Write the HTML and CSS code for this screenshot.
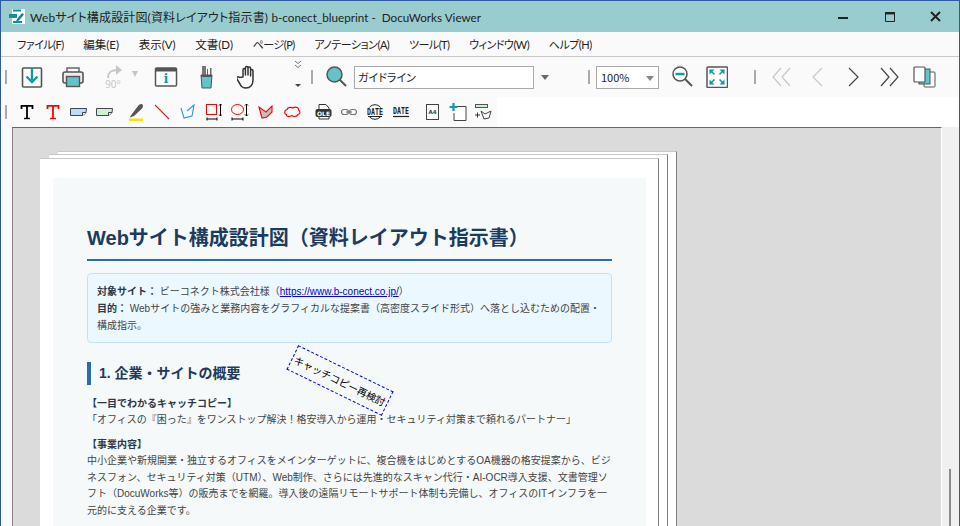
FILE: index.html
```html
<!DOCTYPE html>
<html lang="ja">
<head>
<meta charset="utf-8">
<title>DocuWorks Viewer</title>
<link rel="stylesheet" href="styles.css">
</head>
<body>
<div class="window">
  <header class="titlebar">
    <svg class="app-icon" width="16" height="16" viewBox="0 0 16 16"><rect x="3" y="0" width="13" height="15" fill="#fff"/><rect x="0" y="5" width="8" height="4" fill="#0f8f98"/><path d="M4 1.500h8M4 13h9" stroke="#0f8f98" stroke-width="2" fill="none"/><path d="M8 10l5-6 2 1.500-5 6-3 1z" fill="#1d7f88"/></svg>
    <span class="title-text">Webサイト構成設計図(資料レイアウト指示書) <span class="title-tail">b-conect_blueprint -&nbsp; DocuWorks Viewer</span></span>
    <div class="caption">
      <svg width="46" height="16" viewBox="0 0 46 16"><rect x="17" y="8" width="10" height="2" fill="#222"/></svg>
      <svg width="46" height="16" viewBox="0 0 46 16"><path d="M18.500 3.500h9v9h-9z" fill="none" stroke="#222"/><rect x="18" y="3" width="10" height="2.400" fill="#222"/></svg>
      <svg width="46" height="16" viewBox="0 0 46 16"><path d="M18 3l9 9M27 3l-9 9" stroke="#222" stroke-width="2"/></svg>
    </div>
  </header>
  <nav class="menubar">
    <span class="kana">ファイル(F)</span><span class="kanji">編集(E)</span><span class="kanji">表示(V)</span><span class="kanji">文書(D)</span><span class="kana">ページ(P)</span><span class="kana">アノテーション(A)</span><span class="kana">ツール(T)</span><span class="kana">ウィンドウ(W)</span><span class="kana">ヘルプ(H)</span>
  </nav>
  <div class="toolbar tb1">
    <i class="grip"></i>
    <div class="btn">
      <svg width="22" height="22" viewBox="0 0 22 22"><rect x="1.500" y="2" width="19" height="19" rx="1" fill="#fdfdfd" stroke="#555" stroke-width="1.600"/><path d="M11 2v12" stroke="#139aa5" stroke-width="2.400"/><path d="M5.500 10.500l5.500 5.500 5.500-5.500" fill="none" stroke="#139aa5" stroke-width="2.400"/></svg>
    </div>
    <div class="btn">
      <svg width="22" height="22" viewBox="0 0 22 22"><path d="M5 6V2h12v4" fill="#fff" stroke="#666" stroke-width="1.500"/><rect x="1" y="6" width="20" height="11" rx="2" fill="#eee" stroke="#555" stroke-width="1.600"/><rect x="4.500" y="10.500" width="13" height="10" fill="#63c2ca" stroke="#555" stroke-width="1.400"/></svg>
    </div>
    <div class="btn btn-rotate">
      <svg class="rot" width="22" height="26" viewBox="0 0 22 26"><path d="M4 14c0-6 3-8 10-8" fill="none" stroke="#c6c6c6" stroke-width="2"/><path d="M12 1l6 5-6 5z" fill="#c6c6c6"/><text x="1" y="24" class="t-90">90°</text></svg>
      <i class="caret caret-off"></i>
    </div>
    <div class="btn">
      <svg width="24" height="22" viewBox="0 0 24 22"><rect x="1.500" y="2" width="21" height="18" rx="1" fill="#fff" stroke="#555" stroke-width="1.500"/><rect x="1.500" y="2" width="21" height="3.500" fill="#555"/><text x="12" y="17" class="t-i">i</text></svg>
    </div>
    <div class="btn">
      <svg width="16" height="24" viewBox="0 0 16 24"><path d="M3 10V1h4v9z" fill="#777"/><path d="M8 10V4h1v6zM11 10V3h1.500v7z" fill="#666"/><path d="M2 10h11l-1 13H3z" fill="#63c2ca" stroke="#555"/><path d="M2 11h11" stroke="#555" stroke-width="2"/></svg>
    </div>
    <div class="btn">
      <svg width="22" height="24" viewBox="0 0 22 24"><path d="M6 12V5c0-2 2.400-2 2.400 0v5V3c0-2 2.600-2 2.600 0v7V3.500c0-2 2.600-2 2.600 0V11V6c0-2 2.400-2 2.400 0v9c0 5-3 8-7 8-3 0-5-1.500-6-4l-3-5c-1-2 1-3 2.500-1.500z" fill="#fff" stroke="#333" stroke-width="1.500" stroke-linejoin="round"/></svg>
    </div>
    <div class="more">
      <svg width="8" height="9" viewBox="0 0 8 9"><path d="M1 1l3 2.500L7 1M1 5l3 2.500L7 5" fill="none" stroke="#777"/></svg>
      <i class="caret caret-small"></i>
    </div>
    <i class="grip"></i>
    <svg class="search" width="22" height="22" viewBox="0 0 22 22"><path d="M13 13l7 7" stroke="#555" stroke-width="2"/><circle cx="8.500" cy="8.500" r="7.500" fill="#63c2ca" stroke="#555" stroke-width="1.500"/></svg>
    <div class="field">ガイドライン</div>
    <i class="caret caret-on"></i>
    <i class="grip grip-zoom"></i>
    <div class="select">100%<i class="caret caret-sel"></i></div>
    <svg class="zoomout" width="22" height="22" viewBox="0 0 22 22"><path d="M13 13l7 7" stroke="#555" stroke-width="2"/><circle cx="8" cy="8" r="7" fill="#fff" stroke="#555" stroke-width="1.500"/><rect x="3.500" y="6.800" width="9" height="2.500" fill="#139aa5"/></svg>
    <svg class="fit" width="22" height="22" viewBox="0 0 22 22"><rect x="1" y="1" width="20.500" height="20.500" rx="1" fill="#fff" stroke="#555" stroke-width="1.500"/><path d="M4 4l4.500 4.500M18 4l-4.500 4.500M4 18l4.500-4.500M18 18l-4.500-4.500" stroke="#139aa5" stroke-width="1.600"/><path d="M3.500 3.500h5l-5 5zM18.500 3.500h-5l5 5zM3.500 18.500h5l-5-5zM18.500 18.500h-5l5-5z" fill="#139aa5"/></svg>
    <i class="grip grip-nav"></i>
    <svg class="nav first" width="19" height="20" viewBox="0 0 19 20"><path d="M9 1L1 10l8 9M18 1l-8 9 8 9" fill="none" stroke="#c8c8c8" stroke-width="1.200"/></svg>
    <svg class="nav prev" width="11" height="20" viewBox="0 0 11 20"><path d="M10 1l-9 9 9 9" fill="none" stroke="#c8c8c8" stroke-width="1.200"/></svg>
    <svg class="nav next" width="11" height="20" viewBox="0 0 11 20"><path d="M1 1l9 9-9 9" fill="none" stroke="#444" stroke-width="1.200"/></svg>
    <svg class="nav last" width="19" height="20" viewBox="0 0 19 20"><path d="M1 1l8 9-8 9M10 1l8 9-8 9" fill="none" stroke="#444" stroke-width="1.200"/></svg>
    <svg class="pages" width="23" height="22" viewBox="0 0 23 22"><rect x="11" y="6" width="11" height="15" rx="1" fill="#fff" stroke="#555"/><rect x="6" y="3" width="11" height="15" fill="#63c2ca" stroke="#555"/><rect x="1" y="1" width="11" height="15" rx="1" fill="#fff" stroke="#555" stroke-width="1.200"/></svg>
  </div>
  <div class="toolbar tb2">
    <i class="grip"></i>
    <div class="tool"><svg width="14" height="16" viewBox="0 0 14 16"><path d="M1.500 5V1.800h11V5M7 1.800V14" fill="none" stroke="#000" stroke-width="1.800"/><path d="M4 14.500h6" stroke="#000" stroke-width="1.400"/></svg></div>
    <div class="tool"><svg width="14" height="16" viewBox="0 0 14 16"><path d="M1.500 5V1.800h11V5M7 1.800V14" fill="none" stroke="#f00" stroke-width="1.800"/><path d="M4 14.500h6" stroke="#f00" stroke-width="1.400"/></svg></div>
    <div class="tool"><svg width="18" height="10" viewBox="0 0 18 10"><path d="M.5 1.500h16l-.500 4-3 3H.500z" fill="#bcdcf7" stroke="#445"/><path d="M12.500 8.500V5.500h3.500" fill="#fff" stroke="#445"/></svg></div>
    <div class="tool"><svg width="18" height="10" viewBox="0 0 18 10"><path d="M.5 1.500h16l-.500 4-3 3H.500z" fill="#c9f2cd" stroke="#445"/><path d="M12.500 8.500V5.500h3.500" fill="#fff" stroke="#445"/></svg></div>
    <div class="tool gap"><svg width="16" height="18" viewBox="0 0 16 18"><path d="M2.500 13L10 3c1-1.500 3.500-2.500 4.500-1.500s.5 3-1 4.500L6 13l-4 1.500z" fill="#555"/><rect x="1" y="15.500" width="14" height="2.500" fill="#ffe000"/></svg></div>
    <div class="tool"><svg width="16" height="16" viewBox="0 0 16 16"><path d="M1 1l14 14" stroke="#e02020" stroke-width="1.100"/></svg></div>
    <div class="tool"><svg width="16" height="16" viewBox="0 0 16 16"><path d="M1 4l3 10 8-2 2-11-7 6" fill="none" stroke="#2a96e8" stroke-width="1.100"/></svg></div>
    <div class="tool"><svg width="16" height="18" viewBox="0 0 16 18"><rect x=".500" y="1.500" width="10" height="10" fill="none" stroke="#f00"/><path d="M14.500 1v12M13 2.500L14.500 1 16 2.500M13 11.500l1.500 1.500 1.500-1.500" fill="none" stroke="#000"/><path d="M1 16h10M1 14.500v3M11 14.500v3" stroke="#000" fill="none"/></svg></div>
    <div class="tool"><svg width="18" height="18" viewBox="0 0 18 18"><ellipse cx="6.500" cy="6.500" rx="6" ry="5" fill="none" stroke="#f00"/><path d="M15.500 1v12M14 2.500L15.500 1 17 2.500M14 11.500l1.500 1.500 1.500-1.500" fill="none" stroke="#000"/><path d="M1 16h11M1 14.500v3M12 14.500v3" stroke="#000" fill="none"/></svg></div>
    <div class="tool"><svg width="16" height="14" viewBox="0 0 16 14"><path d="M1 2l3 11 5-1 5-5V1L8 7z" fill="#c0c0c0" stroke="#f00" stroke-width="1.100"/></svg></div>
    <div class="tool"><svg width="17" height="12" viewBox="0 0 17 12"><path d="M3 3.500C4 1 8 1 9 2c2-1.500 6-1 5.500 2 2 1 2 4-.500 4.500C13 11 9 11 8 9.500 6 11 2 11 2.500 8.500 0 8 0 4 3 3.500z" fill="none" stroke="#f00" stroke-width="1.200"/></svg></div>
    <div class="tool gap"><svg width="17" height="18" viewBox="0 0 17 18"><path d="M4 5V1.500h7L14 5v11H4z" fill="#fff" stroke="#333"/><rect x=".500" y="6" width="16" height="8" rx="2" fill="#333"/><text x="8.500" y="12.500" class="t-ole">OLE</text></svg></div>
    <div class="tool"><svg width="16" height="8" viewBox="0 0 16 8"><rect x=".500" y="1.500" width="7" height="5" rx="2.500" fill="none" stroke="#777" stroke-width="1.200"/><rect x="8.500" y="1.500" width="7" height="5" rx="2.500" fill="none" stroke="#777" stroke-width="1.200"/><path d="M5 4h6" stroke="#777" stroke-width="1.200"/></svg></div>
    <div class="tool"><svg width="16" height="16" viewBox="0 0 16 16"><circle cx="8" cy="8" r="7.300" fill="none" stroke="#222"/><rect x="0" y="3.500" width="16" height="8.500" fill="#fafafa"/><text x="8" y="7.700" class="t-date" transform="scale(1 1.400)">DATE</text><path d="M1 12.500h14" stroke="#222"/></svg></div>
    <div class="tool"><svg width="16" height="12" viewBox="0 0 16 12"><text x="8" y="6" class="t-date" transform="scale(1 1.400)">DATE</text><path d="M0 10.500h16" stroke="#222" stroke-width="1.200"/></svg></div>
    <div class="tool gap"><svg width="13" height="16" viewBox="0 0 13 16"><rect x=".500" y=".500" width="12" height="15" fill="#fff" stroke="#444"/><text x="6.500" y="10" class="t-a4">A4</text></svg></div>
    <div class="tool"><svg width="18" height="18" viewBox="0 0 18 18"><path d="M5 3.500h12V17.500H5z" fill="#fff" stroke="#444"/><rect x="0" y="2" width="8" height="8" fill="#fafafa"/><path d="M4.500 0v8M.500 4h8" stroke="#139aa5" stroke-width="2.200"/></svg></div>
    <div class="tool"><svg width="18" height="17" viewBox="0 0 18 17"><rect x=".500" y=".500" width="12" height="3" fill="#c9f2cd" stroke="#555"/><path d="M0 11h5M2.500 8.500v5" stroke="#333"/><path d="M6 7l4 3 6-3-2 7-5 1z" fill="none" stroke="#444"/></svg></div>
  </div>
  <main class="viewer">
    <div class="stage">
      <div class="sheet sheet-back"></div>
      <div class="sheet sheet-mid"></div>
      <article class="sheet sheet-front">
        <div class="paper">
          <h1>Webサイト構成設計図（資料レイアウト指示書）</h1>
          <div class="info">
            <p><b>対象サイト：</b> ビーコネクト株式会社様（<a href="#">https://www.b-conect.co.jp/</a>）</p>
            <p><b>目的：</b> Webサイトの強みと業務内容をグラフィカルな提案書（高密度スライド形式）へ落とし込むための配置・構成指示。</p>
          </div>
          <h2>1. 企業・サイトの概要</h2>
          <p class="label">【一目でわかるキャッチコピー】</p>
          <p class="body">「オフィスの『困った』をワンストップ解決！格安導入から運用・セキュリティ対策まで頼れるパートナー」</p>
          <p class="label second">【事業内容】</p>
          <p class="body">中小企業や新規開業・独立するオフィスをメインターゲットに、複合機をはじめとするOA機器の格安提案から、ビジネスフォン、セキュリティ対策（UTM）、Web制作、さらには先進的なスキャン代行・AI-OCR導入支援、文書管理ソフト（DocuWorks等）の販売までを網羅。導入後の遠隔リモートサポート体制も完備し、オフィスのITインフラを一元的に支える企業です。</p>
        </div>
      </article>
      <div class="stamp">キャッチコピー再検討</div>
    </div>
    <aside class="scrollbar"><i class="thumb"></i></aside>
  </main>
</div>
</body>
</html>
```
FILE: styles.css
```css
* { box-sizing: border-box; }
html, body { margin: 0; height: 100%; overflow: hidden; }
body { font-family: "Noto Sans CJK JP", "Noto Sans", sans-serif; background: #fff; }
i { display: block; font-style: normal; }
p, h1, h2 { margin: 0; }

.window {
  width: 960px; height: 526px; display: flex; flex-direction: column;
  border: 1px solid #2f5a9e; border-bottom: 0; background: #fff;
}

.titlebar { height: 31px; background: #99cccf; display: flex; align-items: center; flex: none; padding-left: 8px; }
.app-icon { margin-right: 5px; flex: none; }
.title-text {
  font-family: Lato, "Noto Sans CJK JP", sans-serif; font-size: 12px; color: #222; white-space: nowrap; flex: 1;
  margin-top: -1px; font-feature-settings: "palt"; letter-spacing: .15px;
}
.title-tail { font-size: 11.700px; letter-spacing: 0; }
.caption { display: flex; }
.caption svg { flex: none; }

.menubar {
  height: 25px; flex: none; background: #fafafa; border-bottom: 1px solid #c8c8c8;
  display: flex; align-items: center; padding-left: 16px; gap: 19.600px;
  font-family: Lato, "Noto Sans CJK JP", sans-serif; font-size: 11px; color: #222; font-feature-settings: "palt";
}
.kana { letter-spacing: -.5px; }
.kanji { font-size: 11.500px; }

.toolbar { flex: none; display: flex; align-items: center; position: relative; }
.tb1 { height: 40px; background: #fafafa; padding-left: 4px; }
.tb2 { height: 30px; background: linear-gradient(90deg, #fafafa 496px, #fff 496px); padding-left: 4px; }
.grip { width: 2px; height: 14px; background: #aaa; flex: none; }

.btn { width: 41px; display: flex; justify-content: center; align-items: center; flex: none; }
.tb1 > .grip:first-child + .btn { margin-left: 4px; }
.btn-rotate { width: 52px; justify-content: flex-start; padding-left: 11px; gap: 6px; }
.rot { overflow: visible; }
.caret { width: 0; height: 0; border: 4px solid transparent; border-top: 5px solid #666; border-bottom: 0; flex: none; }
.caret-off { border-top-color: #c4c4c4; border-width: 6px 3.500px 0; margin-top: -6px; }
.more { width: 16px; margin-left: 22px; height: 30px; display: flex; flex-direction: column; align-items: center; justify-content: space-between; flex: none; margin-top: -4px; }
.caret-small { border-width: 3px 3px 0; border-top-color: #444; margin-bottom: 3px; }
.more + .grip { margin-left: 5px; }
.search { margin-left: 13px; flex: none; }
.field {
  width: 180px; height: 23px; margin-left: 6px; border: 1px solid #a9a9a9; background: #fff;
  font-size: 11px; color: #222; padding-left: 3px; line-height: 21px; flex: none; font-feature-settings: "palt";
}
.caret-on { margin-left: 7px; }
.grip-zoom { margin-left: 39px; }
.select {
  width: 63px; height: 23px; margin-left: 6px; border: 1px solid #a9a9a9; background: #fff;
  font-size: 11px; color: #222; padding-left: 4px; line-height: 21px; position: relative; flex: none;
}
.caret-sel { position: absolute; right: 4px; top: 9px; border-top-color: #888; }
.zoomout { margin-left: 13px; flex: none; }
.fit { margin-left: 12px; flex: none; }
.grip-nav { margin-left: 26px; }
.nav { flex: none; }
.first { margin-left: 16px; }
.prev { margin-left: 21px; }
.next { margin-left: 25px; }
.last { margin-left: 21px; }
.pages { margin-left: 14px; flex: none; }

.tool { width: 26px; display: flex; justify-content: center; align-items: center; flex: none; }
.tb2 > .grip + .tool { margin-left: 7px; }
.tool.gap { margin-left: 5px; }

.t-90 { font: 10px "Noto Sans", sans-serif; fill: #c6c6c6; }
.t-i { font: bold 13px "DejaVu Serif", serif; fill: #139aa5; text-anchor: middle; }
.t-ole { font: bold 6px "DejaVu Sans", sans-serif; fill: #fff; text-anchor: middle; }
.t-date { font: bold 6.600px "DejaVu Sans Mono", monospace; fill: #222; text-anchor: middle; }
.t-a4 { font: bold 5.500px "DejaVu Sans", sans-serif; fill: #444; text-anchor: middle; }

.viewer { flex: 1; display: flex; min-height: 0; background: #fafafa; padding-left: 11px; }
.stage {
  flex: 1; position: relative; overflow: hidden; background: #dbdbdb;
  border-top: 1px solid #666; border-left: 1px solid #888; border-right: 1px solid #fff;
}
.scrollbar { width: 17px; background: #f0f0f0; flex: none; position: relative; }
.thumb { position: absolute; left: 7px; top: 342px; width: 2px; height: 60px; background: #8a8a8a; }

.sheet {
  position: absolute; width: 619px; height: 600px; background: #fff;
  border-top: 1px solid #c8c8c8; border-right: 1px solid #808080;
}
.sheet-back { left: 45px; top: 23px; }
.sheet-mid { left: 36px; top: 26px; }
.sheet-front { left: 27px; top: 30px; }

.paper {
  margin: 19px 0 0 13px; width: 593px; height: 560px; background: #f5f9fa; padding: 40px 34px;
  font-family: "Liberation Sans", "Noto Sans CJK JP", sans-serif;
}
h1 {
  font-size: 20px; line-height: 40px; color: #1c3b60; font-weight: 700; white-space: nowrap;
  height: 43px; border-bottom: 2px solid #2b6cb0; margin-bottom: 12px;
}
.info {
  height: 70px; border: 1px solid #bee3f8; border-radius: 4px; background: #ebf8ff;
  padding: 9px 9px; font-size: 10px; line-height: 17px; color: #444; margin-bottom: 19px;
}
.info b { color: #2d3748; }
.info a { color: #00e; text-decoration: underline; }
h2 {
  font-size: 14px; line-height: 23px; color: #1f3a5a; font-weight: 700;
  border-left: 4px solid #2b6cb0; padding-left: 8px; margin-bottom: 10px;
}
.label { font-size: 10px; line-height: 17px; font-weight: 700; color: #2d3748; }
.label.second { margin-top: 7px; }
.body { font-size: 10px; line-height: 16.800px; color: #444; }

.stamp {
  position: absolute; left: 274px; top: 239px; width: 106px; height: 27px;
  transform: rotate(26deg); border: 1px dashed #00f; color: #000;
  font-size: 10px; line-height: 25px; white-space: nowrap; text-align: center;
}
```
